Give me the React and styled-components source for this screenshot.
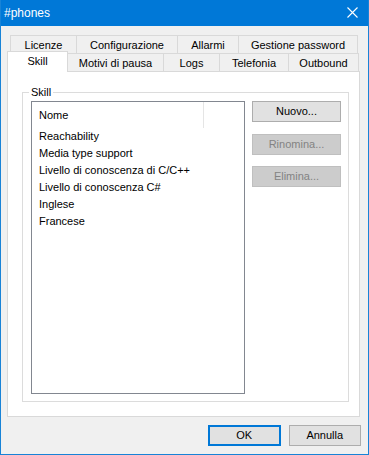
import React from "react";
import styled, { createGlobalStyle } from "styled-components";

const Global = createGlobalStyle`
  html, body { margin: 0; padding: 0; background: #f0f0f0; }
  body { font-family: "Liberation Sans", Arial, sans-serif; }
  * { box-sizing: border-box; }
`;

const Window = styled.div`
  width: 369px;
  height: 455px;
  border: 1px solid #1883d7;
  border-top: 0;
  background: #f0f0f0;
  display: flex;
  flex-direction: column;
  font-family: "Liberation Sans", Arial, sans-serif;
  font-size: 11px;
  color: #000;
`;

const TitleBar = styled.div`
  height: 26px;
  flex: none;
  background: #0078d7;
  display: flex;
  align-items: center;
  justify-content: space-between;
  padding: 0 10px 1px 3px;
`;

const Title = styled.span`
  color: #fff;
  font-size: 12px;
  line-height: 14px;
`;

const Close = styled.svg`
  width: 11px;
  height: 11px;
  display: block;
`;

const Body = styled.div`
  flex: 1;
  display: flex;
  flex-direction: column;
  padding: 9px 7px 8px 6px;
`;

const Tabs = styled.div`
  display: flex;
  flex-direction: column;
  width: 353px;
`;

const TabRow = styled.div`
  display: flex;
  align-items: flex-end;
  height: 18px;
  padding-left: ${(p) => p.$indent || 0}px;
`;

const Tab = styled.div`
  position: relative;
  flex: none;
  width: ${(p) => p.$w}px;
  height: ${(p) => (p.$selected ? 21 : 18)}px;
  margin-bottom: ${(p) => (p.$selected ? -1 : 0)}px;
  margin-left: ${(p) => (p.$first ? 0 : -1)}px;
  z-index: ${(p) => (p.$selected ? 2 : 0)};
  border: 1px solid #d9d9d9;
  border-bottom: 0;
  background: ${(p) => (p.$selected ? "#ffffff" : "#f0f0f0")};
  display: flex;
  align-items: center;
  justify-content: center;
  padding-bottom: ${(p) => (p.$selected ? 2 : 0)}px;
  padding-top: ${(p) => (p.$selected ? 0 : 1)}px;
  font-size: 11px;
  line-height: 13px;
  white-space: nowrap;
`;

const Panel = styled.div`
  height: 346px;
  background: #fff;
  border: 1px solid #d9d9d9;
  display: flex;
  flex-direction: column;
  padding: 20px 10px 14px 14px;
`;

const Group = styled.div`
  position: relative;
  flex: 1;
  border: 1px solid #dcdcdc;
  display: flex;
  gap: 7px;
  padding: 8px 7px 7px 8px;
`;

const GroupLabel = styled.span`
  position: absolute;
  top: -8px;
  left: 6px;
  padding: 0 2px;
  background: #fff;
  font-size: 11px;
  line-height: 14px;
`;

const ListView = styled.div`
  width: 214px;
  flex: none;
  border: 1px solid #828790;
  background: #fff;
  display: flex;
  flex-direction: column;
`;

const ListHeader = styled.div`
  height: 26px;
  display: flex;
`;

const HeaderCell = styled.div`
  width: 172px;
  border-right: 1px solid #e5e5e5;
  display: flex;
  align-items: center;
  padding-left: 7px;
  line-height: 13px;
`;

const ListItem = styled.div`
  height: 17px;
  line-height: 17px;
  padding-left: 7px;
  white-space: nowrap;
`;

const ButtonCol = styled.div`
  display: flex;
  flex-direction: column;
  gap: 11.5px;
`;

const Button = styled.button`
  font-family: "Liberation Sans", Arial, sans-serif;
  font-size: 11px;
  width: ${(p) => p.$w}px;
  height: 21px;
  padding: 0;
  margin: 0;
  background: ${(p) => (p.disabled ? "#cccccc" : "#e1e1e1")};
  color: ${(p) => (p.disabled ? "#838383" : "#000")};
  border: ${(p) => (p.$default ? "2px solid #0078d7" : p.disabled ? "1px solid #bfbfbf" : "1px solid #adadad")};
  border-radius: 0;
  display: flex;
  align-items: center;
  justify-content: center;
  line-height: 13px;
`;

const Footer = styled.div`
  display: flex;
  justify-content: flex-end;
  gap: 8px;
  margin-top: 8px;
  padding-left: 201px;
`;

const row1 = [
  ["Licenze", 67],
  ["Configurazione", 102],
  ["Allarmi", 62],
  ["Gestione password", 120],
];

const row2 = [
  ["Skill", 61, true],
  ["Motivi di pausa", 97],
  ["Logs", 57],
  ["Telefonia", 70],
  ["Outbound", 71],
];

const items = [
  "Reachability",
  "Media type support",
  "Livello di conoscenza di C/C++",
  "Livello di conoscenza C#",
  "Inglese",
  "Francese",
];

export default function App() {
  return (
    <>
      <Global />
      <Window>
        <TitleBar>
          <Title>#phones</Title>
          <Close viewBox="0 0 11 11">
            <path d="M0.5 0.5 L10.5 10.5 M10.5 0.5 L0.5 10.5" stroke="#fff" strokeWidth="1.1" fill="none" />
          </Close>
        </TitleBar>
        <Body>
          <Tabs>
            <TabRow $indent={3}>
              {row1.map(([t, w], i) => (
                <Tab key={t} $w={w} $first={i === 0}>{t}</Tab>
              ))}
            </TabRow>
            <TabRow>
              {row2.map(([t, w, s], i) => (
                <Tab key={t} $w={w} $first={i === 0} $selected={s}>{t}</Tab>
              ))}
            </TabRow>
            <Panel>
              <Group>
                <GroupLabel>Skill</GroupLabel>
                <ListView>
                  <ListHeader>
                    <HeaderCell>Nome</HeaderCell>
                  </ListHeader>
                  {items.map((it) => (
                    <ListItem key={it}>{it}</ListItem>
                  ))}
                </ListView>
                <ButtonCol>
                  <Button $w={89}>Nuovo...</Button>
                  <Button $w={89} disabled>Rinomina...</Button>
                  <Button $w={89} disabled>Elimina...</Button>
                </ButtonCol>
              </Group>
            </Panel>
          </Tabs>
          <Footer>
            <Button $w={73} $default>OK</Button>
            <Button $w={73}>Annulla</Button>
          </Footer>
        </Body>
      </Window>
    </>
  );
}
